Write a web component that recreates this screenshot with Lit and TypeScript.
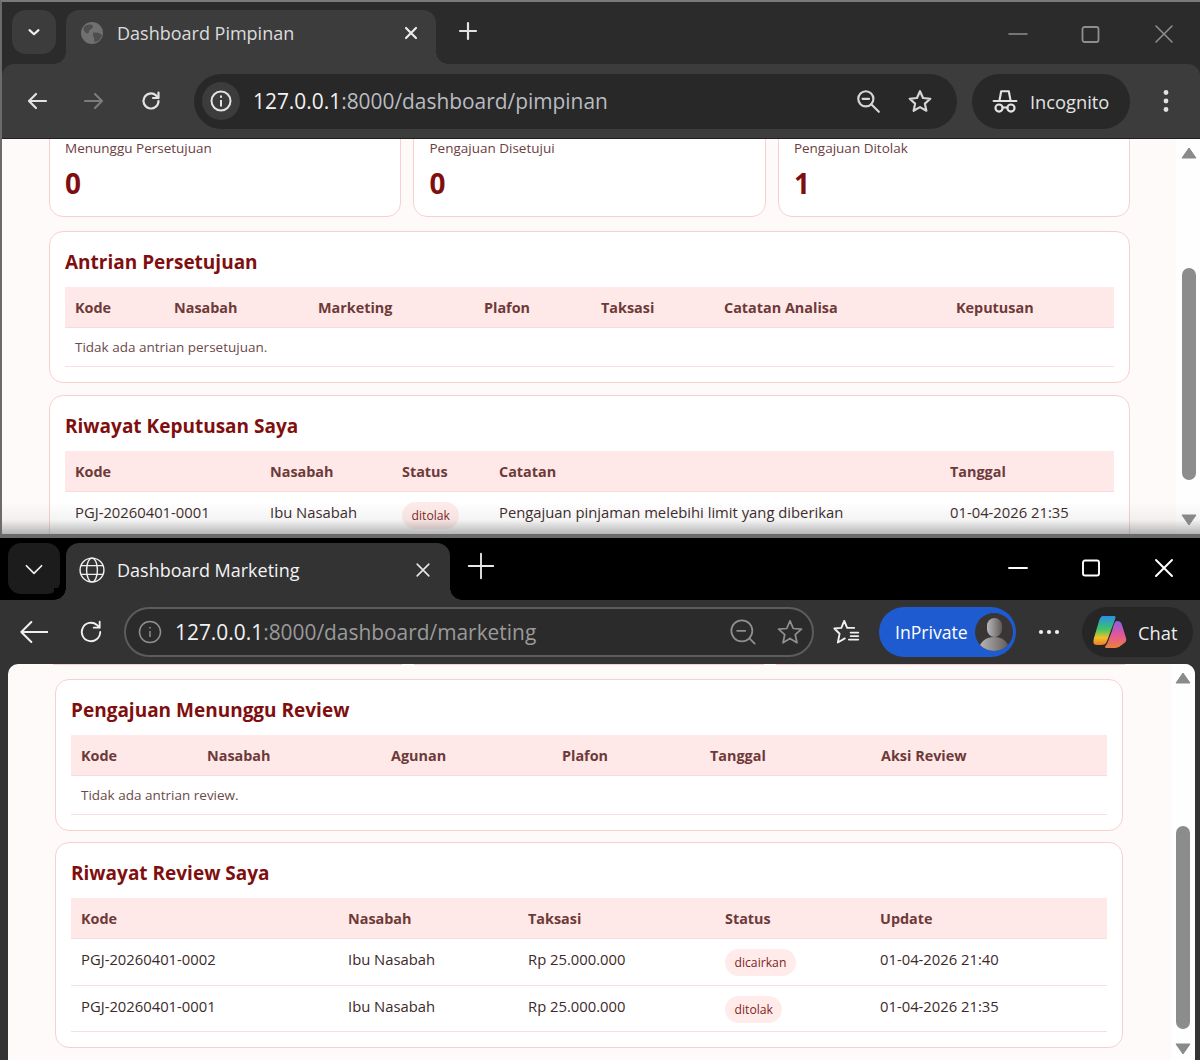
import { css, html, LitElement, TemplateResult } from "lit";
import { customElement } from "lit/decorators.js";

type Cell = string | { pill: string };

const panelTable = (cols: string, heads: string[], rows: Cell[][], empty?: string) => html`
  <div class="tbl ${cols}">
    <div class="row head">${heads.map((h) => html`<div class="cell">${h}</div>`)}</div>
    ${empty ? html`<div class="empty">${empty}</div>` : ""}
    ${rows.map(
      (r) => html`<div class="row body">
        ${r.map((c) =>
          typeof c === "string"
            ? html`<div class="cell">${c}</div>`
            : html`<div class="cell"><span class="pill">${c.pill}</span></div>`,
        )}
      </div>`,
    )}
  </div>
`;

const panel = (title: string, body: TemplateResult) => html`
  <section class="panel">
    <h2>${title}</h2>
    ${body}
  </section>
`;

const scrollbar = (cls: string) => html`
  <div class="scroll ${cls}">
    <svg class="arrow" width="16" height="12" viewBox="0 0 16 12"><path d="M8 1 L15 11 H1 Z" fill="#8a8a8a" stroke="#8a8a8a" stroke-linejoin="round"/></svg>
    <div class="thumb"></div>
    <svg class="arrow end" width="16" height="12" viewBox="0 0 16 12"><path d="M8 11 L15 1 H1 Z" fill="#8a8a8a" stroke="#8a8a8a" stroke-linejoin="round"/></svg>
  </div>
`;

const icon = (size: number, stroke: string, width: number, d: string) => html`
  <svg width=${size} height=${size} viewBox="0 0 24 24" fill="none" stroke=${stroke} stroke-width=${width} stroke-linecap="round" stroke-linejoin="round"><path d=${d}/></svg>
`;

@customElement("app-root")
export class AppRoot extends LitElement {
  static override styles = css`
    :host {
      display: flex;
      flex-direction: column;
      width: 1200px;
      height: 1060px;
      overflow: hidden;
      font-family: "Open Sans", "Noto Sans", sans-serif;
      background: #000;
    }
    svg { display: block; flex: none; }

    /* browser windows */
    .win { display: flex; flex-direction: column; overflow: hidden; position: relative; }
    .win.a { height: 538px; background: #2b2b2b; border-top: 2px solid #7a7a7a; border-left: 2px solid #6b6b6b; box-sizing: border-box; }
    .win.b { height: 522px; background: #000; }

    .strip { display: flex; align-items: flex-start; flex: none; }
    .a .strip { height: 62px; padding: 8px 0 0 10px; box-sizing: border-box; color: #e3e3e3; }
    .b .strip { height: 62px; padding: 5px 0 0 8px; box-sizing: border-box; color: #fff; }

    .tabs-btn { display: flex; align-items: center; justify-content: center; }
    .a .tabs-btn { width: 44px; height: 44px; background: #3c3c3c; border-radius: 14px; }
    .b .tabs-btn { width: 52px; height: 51px; background: #1c1c1c; border-radius: 13px; }

    .tab { display: flex; align-items: center; position: relative; box-sizing: border-box; font-size: 18px; }
    .a .tab { width: 370px; height: 54px; margin-left: 10px; background: #3c3c3c; border-radius: 13px 13px 0 0; padding: 0 15px 8px 14px; color: #dcdcdc; }
    .b .tab { width: 384px; height: 57px; margin-left: 6px; background: #333; border-radius: 13px 13px 0 0; padding: 0 17px 3px 13px; color: #f4f4f4; }
    .tab::before, .tab::after { content: ""; position: absolute; bottom: 0; width: 12px; height: 12px; }
    .tab::before { left: -12px; }
    .tab::after { right: -12px; }
    .a .tab::before { background: radial-gradient(circle at 0 0, #2b2b2b 11.5px, #3c3c3c 12px); }
    .a .tab::after { background: radial-gradient(circle at 100% 0, #2b2b2b 11.5px, #3c3c3c 12px); }
    .b .tab::before { background: radial-gradient(circle at 0 0, #000 11.5px, #333 12px); }
    .b .tab::after { background: radial-gradient(circle at 100% 0, #000 11.5px, #333 12px); }
    .tab .name { flex: 1; white-space: nowrap; }
    .a .tab .name { margin-left: 13px; }
    .b .tab .name { margin-left: 12px; }
    .new { margin-left: 19px; }
    .a .new { margin-top: 9px; margin-left: 20px; }
    .b .new { margin-top: 9px; margin-left: 17px; }

    .caption { margin-left: auto; display: flex; }
    .caption div { width: 73px; display: flex; justify-content: center; }
    .a .caption { padding: 12px 0 0; }
    .b .caption { padding: 13px 0 0; }

    .bar { display: flex; align-items: center; flex: none; box-sizing: border-box; }
    .a .bar { height: 75px; background: #3c3c3c; border-radius: 12px 12px 0 0; padding: 0 0 0 23px; border-bottom: 1px solid #1f1f1f; }
    .b .bar { height: 64px; background: #333; padding: 0 7px 0 16px; }

    .nav { display: flex; align-items: center; flex: none; }
    .a .nav { width: 169px; gap: 33px; }
    .b .nav { width: 108px; gap: 30px; }

    .omni { display: flex; align-items: center; box-sizing: border-box; }
    .a .omni { width: 763px; height: 55px; background: #282828; border-radius: 28px; padding: 0 24px 0 8px; }
    .b .omni { width: 690px; height: 50px; background: #2b2b2b; border: 2px solid #5c5c5c; border-radius: 25px; padding: 0 8px 0 12px; }
    .info { width: 38px; height: 38px; border-radius: 50%; display: flex; align-items: center; justify-content: center; }
    .a .info { background: #3c3c3c; }
    .url { white-space: nowrap; flex: 1; font-size: 20.9px; }
    .a .url { margin-left: 13px; color: #b9bcc0; }
    .b .url { margin-left: 13px; color: #9a9a9a; }
    .url b { font-weight: 400; color: #f2f2f2; }
    .omni-ic { display: flex; align-items: center; }
    .a .omni-ic { gap: 26px; }
    .b .omni-ic { gap: 19px; }

    .incog { margin-left: 15px; width: 158px; height: 55px; border-radius: 28px; background: #282828; display: flex; align-items: center; gap: 12px; padding-left: 20px; box-sizing: border-box; font-size: 18.3px; color: #e3e3e3; }
    .kebab { margin-left: 33px; }

    .fav { margin-left: 18px; }
    .inprivate { margin-left: 19px; width: 137px; height: 50px; border-radius: 25px; background: #1f5bd0; color: #fff; font-size: 17.6px; display: flex; align-items: center; box-sizing: border-box; padding: 0 3px 0 16px; justify-content: space-between; }
    .avatar { width: 38px; height: 38px; border-radius: 50%; background: #3a3535; overflow: hidden; }
    .dots { margin-left: 22px; }
    .chat { margin-left: 22px; width: 111px; height: 50px; border-radius: 25px; background: #262626; display: flex; align-items: center; gap: 10px; padding-left: 10px; box-sizing: border-box; font-size: 18.3px; color: #eee; }

    /* page */
    .view { flex: 1; min-height: 0; display: flex; overflow: hidden; background: #fffafa; }
    .b .wrap { flex: 1; min-height: 0; background: #333; padding: 0 5px 0 8px; display: flex; }
    .b .view { border-radius: 10px 10px 0 0; }
    .main { flex: 1; min-width: 0; }
    .a .main { padding: 0 46px 0 47px; }
    .b .main { padding: 0 48px 0 47px; }
    .inner { display: flex; flex-direction: column; }
    .a .inner { margin-top: -30px; gap: 12px; }
    .b .inner { gap: 11px; }

    .peek { display: grid; grid-template-columns: repeat(3, 1fr); gap: 12px; height: 15px; margin-bottom: 0; margin-top: 0; margin-left: -2px; margin-right: -2px; }
    .peek div { height: 1px; background: #f8d0d0; }
    .b .inner .peek { margin-bottom: -11px; }

    .stats { display: grid; grid-template-columns: repeat(3, 1fr); gap: 12.33px; margin-bottom: 2px; }
    .stat { background: #fff; border: 1px solid #f8d0d0; border-radius: 14px; height: 108px; box-sizing: border-box; padding: 29px 15px 0; }
    .stat .lbl { font-size: 13.5px; color: #6b4040; line-height: 18px; }
    .stat .num { font-size: 28px; font-weight: 700; color: #7f0f0f; line-height: 36px; margin-top: 8px; }

    .panel { background: #fff; border: 1px solid #f8d0d0; border-radius: 14px; padding: 15px; box-sizing: border-box; }
    h2 { margin: 0 0 10px; font-size: 19px; line-height: 30px; font-weight: 700; color: #7f0f0f; }

    .row { display: grid; }
    .cell { padding: 0 10px; white-space: nowrap; box-sizing: border-box; }
    .head { height: 40px; align-items: center; background: #ffe9e8; border-bottom: 1px solid #f8dcdc; font-weight: 700; color: #6d3a3a; font-size: 14.4px; }
    .body { height: 46px; box-sizing: border-box; align-items: start; border-bottom: 1px solid #f9e0e0; color: #3b2a2a; font-size: 14.8px; }
    .body:nth-child(2) { height: 47px; }
    .body .cell { padding-top: 9px; line-height: 22px; }
    .empty { height: 38px; display: flex; align-items: center; padding: 0 10px; border-bottom: 1px solid #f9e0e0; color: #6b4a4a; font-size: 13.5px; }
    .pill { display: block; width: fit-content; margin-top: 1px; background: #ffecea; color: #7f1d1d; border-radius: 14px; padding: 0 9.5px; font-size: 12.2px; line-height: 27px; height: 27px; }

    .c1 .row { grid-template-columns: 99px 144px 166px 117px 123px 232px 168px; }
    .c2 .row { grid-template-columns: 195px 132px 97px 451px 174px; }
    .c3 .row { grid-template-columns: 126px 184px 171px 148px 171px 238px; }
    .c4 .row { grid-template-columns: 267px 180px 197px 155px 239px; }

    .scroll { flex: none; display: flex; flex-direction: column; align-items: center; background: #fefefe; box-sizing: border-box; }
    .scroll .thumb { width: 14px; background: #8c8c8c; border-radius: 7px; }
    .scroll .end { margin-top: auto; }
    .s1 { width: 24px; padding: 8px 0 12px 2px; }
    .s1 .thumb { height: 212px; margin-top: 109px; }
    .s2 { width: 24px; padding: 8px 0 5px; }
    .s2 .thumb { height: 203px; margin-top: 142px; }

    .fade { position: absolute; left: 0; right: 0; bottom: 0; height: 36px; background: linear-gradient(rgba(110,110,110,0), rgba(110,110,110,.08) 50%, rgba(110,110,110,.5) 89%, #6a6a6a 89%); pointer-events: none; }
  `;

  override render() {
    return html`
      <div class="win a">
        <div class="strip">
          <div class="tabs-btn">${icon(18, "#f0f0f0", 2.8, "M6 9.5 L12 15 L18 9.5")}</div>
          <div class="tab">
            <svg width="24" height="24" viewBox="0 0 24 24"><circle cx="12" cy="12" r="11" fill="#707070"/><path d="M5 5 C8 3 12 3 13 5 C13 8 10 8 9 10 C9 13 7 13 5 11 C3 9 3 7 5 5Z M13 12 C16 11 20 12 22 14 C21 18 18 21 15 21 C13 19 15 17 13 15 Z" fill="#4c4f52"/></svg>
            <span class="name">Dashboard Pimpinan</span>
            ${icon(20, "#ececec", 2.6, "M6 6 L18 18 M18 6 L6 18")}
          </div>
          <div class="new">${icon(24, "#e3e3e3", 2.2, "M12 4 V20 M4 12 H20")}</div>
          <div class="caption">
            <div>${icon(24, "#8e8e8e", 1.6, "M3 12 H21")}</div>
            <div>${icon(24, "#8e8e8e", 1.8, "M5.5 5 H17.5 A2 2 0 0 1 19.5 7 V18 A2 2 0 0 1 17.5 20 H5.5 A2 2 0 0 1 3.5 18 V7 A2 2 0 0 1 5.5 5Z")}</div>
            <div>${icon(24, "#8e8e8e", 1.6, "M4 4 L20 20 M20 4 L4 20")}</div>
          </div>
        </div>
        <div class="bar">
          <div class="nav">
            ${icon(24, "#e3e3e3", 2.2, "M21 12 H4 M11 5 L4 12 L11 19")}
            ${icon(24, "#7c7c7c", 2.2, "M3 12 H20 M13 5 L20 12 L13 19")}
            ${icon(24, "#e3e3e3", 2.2, "M19.5 12 A7.5 7.5 0 1 1 17 6.4 L19.5 9 M19.5 3.5 V9 H14")}
          </div>
          <div class="omni">
            <div class="info">
              <svg width="24" height="24" viewBox="0 0 24 24" fill="none" stroke="#e3e3e3" stroke-width="2"><circle cx="12" cy="12" r="9.5"/><path d="M12 11 V17.5 M12 6.5 V8.8"/></svg>
            </div>
            <div class="url"><b>127.0.0.1</b>:8000/dashboard/pimpinan</div>
            <div class="omni-ic">
              <svg width="26" height="26" viewBox="0 0 24 24" fill="none" stroke="#d6d6d6" stroke-width="2" stroke-linecap="round"><circle cx="10" cy="10" r="7"/><path d="M7 10 H13 M15 15 L22 22"/></svg>
              ${icon(26, "#d6d6d6", 2, "M12 3 L14.8 9.2 L21.5 9.9 L16.5 14.4 L17.9 21 L12 17.6 L6.1 21 L7.5 14.4 L2.5 9.9 L9.2 9.2 Z")}
            </div>
          </div>
          <div class="incog">
            <svg width="26" height="26" viewBox="0 0 24 24" fill="none" stroke="#e3e3e3" stroke-width="2" stroke-linecap="round" stroke-linejoin="round"><path d="M7 11 L8.5 3 H15.5 L17 11 M1.5 12 H22.5"/><circle cx="6.5" cy="18.5" r="3.3"/><circle cx="17.5" cy="18.5" r="3.3"/><path d="M9.8 18 H14.2"/></svg>
            <span>Incognito</span>
          </div>
          <svg class="kebab" width="6" height="24" viewBox="0 0 6 24" fill="#e3e3e3"><circle cx="3" cy="3.5" r="2.4"/><circle cx="3" cy="12" r="2.4"/><circle cx="3" cy="20.5" r="2.4"/></svg>
        </div>
        <div class="view">
          <div class="main">
            <div class="inner">
              <div class="stats">
                <div class="stat"><div class="lbl">Menunggu Persetujuan</div><div class="num">0</div></div>
                <div class="stat"><div class="lbl">Pengajuan Disetujui</div><div class="num">0</div></div>
                <div class="stat"><div class="lbl">Pengajuan Ditolak</div><div class="num">1</div></div>
              </div>
              ${panel("Antrian Persetujuan", panelTable("c1", ["Kode", "Nasabah", "Marketing", "Plafon", "Taksasi", "Catatan Analisa", "Keputusan"], [], "Tidak ada antrian persetujuan."))}
              ${panel("Riwayat Keputusan Saya", panelTable("c2", ["Kode", "Nasabah", "Status", "Catatan", "Tanggal"], [
                ["PGJ-20260401-0001", "Ibu Nasabah", { pill: "ditolak" }, "Pengajuan pinjaman melebihi limit yang diberikan", "01-04-2026 21:35"],
              ]))}
            </div>
          </div>
          ${scrollbar("s1")}
        </div>
        <div class="fade"></div>
      </div>

      <div class="win b">
        <div class="strip">
          <div class="tabs-btn">${icon(26, "#f0f0f0", 1.6, "M5 9 L12 16 L19 9")}</div>
          <div class="tab">
            <svg width="26" height="26" viewBox="0 0 24 24" fill="none" stroke="#f0f0f0" stroke-width="1.3"><circle cx="12" cy="12" r="11"/><ellipse cx="12" cy="12" rx="5" ry="11"/><path d="M1.8 8 H22.2 M1.8 16 H22.2"/></svg>
            <span class="name">Dashboard Marketing</span>
            ${icon(20, "#e8e8e8", 1.9, "M5 5 L19 19 M19 5 L5 19")}
          </div>
          <div class="new">${icon(28, "#e8e8e8", 1.6, "M12 1.5 V22.5 M1.5 12 H22.5")}</div>
          <div class="caption">
            <div>${icon(24, "#fff", 1.8, "M3 12 H21")}</div>
            <div>${icon(24, "#fff", 1.9, "M6 4.5 H18 A2 2 0 0 1 20 6.5 V17.5 A2 2 0 0 1 18 19.5 H6 A2 2 0 0 1 4 17.5 V6.5 A2 2 0 0 1 6 4.5Z")}</div>
            <div>${icon(24, "#fff", 2, "M4 4 L20 20 M20 4 L4 20")}</div>
          </div>
        </div>
        <div class="bar">
          <div class="nav">
            ${icon(32, "#f0f0f0", 1.5, "M26 12 H4 M11.5 4.5 L4 12 L11.5 19.5")}
            ${icon(26, "#f0f0f0", 1.7, "M20.5 12 A8.5 8.5 0 1 1 17.5 5.5 L20 8 M20 2.5 V8 H14.5")}
          </div>
          <div class="omni">
            <svg width="24" height="24" viewBox="0 0 24 24" fill="none" stroke="#8f8f8f" stroke-width="1.5"><circle cx="12" cy="12" r="10.5"/><path d="M12 11 V17 M12 7 V8.5"/></svg>
            <div class="url"><b>127.0.0.1</b>:8000/dashboard/marketing</div>
            <div class="omni-ic">
              <svg width="28" height="28" viewBox="0 0 24 24" fill="none" stroke="#8f8f8f" stroke-width="1.5" stroke-linecap="round"><circle cx="11" cy="11" r="9"/><path d="M7 11 H14 M17.5 17.5 L22 22"/></svg>
              ${icon(28, "#8f8f8f", 1.5, "M12 2.5 L14.8 9 L21.8 9.6 L16.5 14.2 L18 21.2 L12 17.5 L6 21.2 L7.5 14.2 L2.2 9.6 L9.2 9 Z")}
            </div>
          </div>
          <svg class="fav" width="28" height="28" viewBox="0 0 24 24" fill="none" stroke="#f0f0f0" stroke-width="1.6" stroke-linecap="round" stroke-linejoin="round"><path d="M10.5 2.5 L13 8.5 H19 M10.5 2.5 L8 8.5 L2 9 L6.5 13.5 L5 21 L11 17.5 M16 12.5 H22.5 M16 15.5 H22.5 M14.5 18.5 H22.5"/></svg>
          <div class="inprivate">
            <span>InPrivate</span>
            <div class="avatar">
              <svg width="38" height="38" viewBox="0 0 38 38"><defs><linearGradient id="av" x1="0" x2="1"><stop offset="0" stop-color="#b8b8b8"/><stop offset="1" stop-color="#5f5a5a"/></linearGradient></defs><rect x="12" y="5" width="15" height="19" rx="7.5" fill="url(#av)"/><path d="M4 38 C4 28 12 24 19 24 C27 24 34 28 34 38Z" fill="url(#av)"/></svg>
            </div>
          </div>
          <svg class="dots" width="22" height="6" viewBox="0 0 22 6" fill="#f0f0f0"><circle cx="3" cy="3" r="2.1"/><circle cx="11" cy="3" r="2.1"/><circle cx="19" cy="3" r="2.1"/></svg>
          <div class="chat">
            <svg width="36" height="36" viewBox="0 0 36 36">
              <defs>
                <linearGradient id="cp1" x1="0" y1="0" x2="0" y2="1"><stop offset="0" stop-color="#2a8fe8"/><stop offset=".45" stop-color="#3cc46a"/><stop offset=".75" stop-color="#f2c028"/><stop offset="1" stop-color="#ee7a2a"/></linearGradient>
                <linearGradient id="cp2" x1="0" y1="0" x2="0" y2="1"><stop offset="0" stop-color="#8a5fe0"/><stop offset=".5" stop-color="#e0569c"/><stop offset="1" stop-color="#ef7f3a"/></linearGradient>
              </defs>
              <path d="M11 2 H22 C25 2 23 5 22 8 L15 27 C14 30 12 31 9 31 H5 C1 31 1 28 2 24 L7 7 C8 4 9 2 11 2Z" fill="url(#cp1)"/>
              <path d="M25 7 C28 7 29 8 30 11 L34 24 C35 27 33 29 31 30 L27 33 C25 34 22 34 18 34 H15 C12 34 13 32 15 30 L20 17 C21 14 22 7 25 7Z" fill="url(#cp2)"/>
            </svg>
            <span>Chat</span>
          </div>
        </div>
        <div class="wrap">
          <div class="view">
            <div class="main">
              <div class="inner">
                <div class="peek"><div></div><div></div><div></div></div>
                ${panel("Pengajuan Menunggu Review", panelTable("c3", ["Kode", "Nasabah", "Agunan", "Plafon", "Tanggal", "Aksi Review"], [], "Tidak ada antrian review."))}
                ${panel("Riwayat Review Saya", panelTable("c4", ["Kode", "Nasabah", "Taksasi", "Status", "Update"], [
                  ["PGJ-20260401-0002", "Ibu Nasabah", "Rp 25.000.000", { pill: "dicairkan" }, "01-04-2026 21:40"],
                  ["PGJ-20260401-0001", "Ibu Nasabah", "Rp 25.000.000", { pill: "ditolak" }, "01-04-2026 21:35"],
                ]))}
              </div>
            </div>
            ${scrollbar("s2")}
          </div>
        </div>
      </div>
    `;
  }
}
